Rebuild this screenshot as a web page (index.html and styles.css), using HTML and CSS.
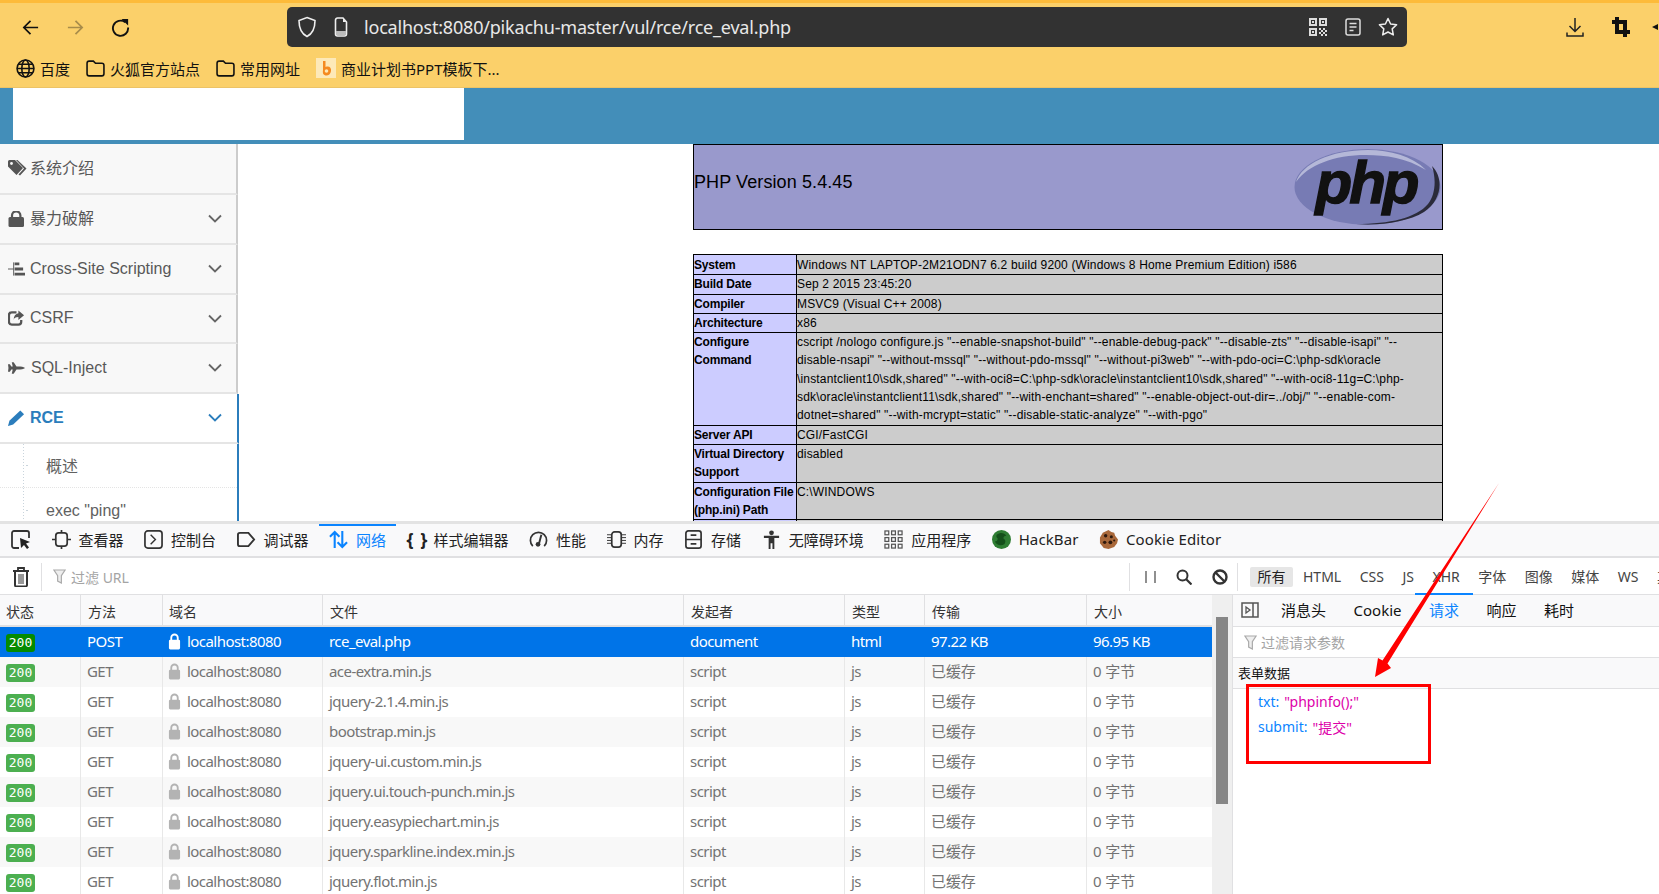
FILE: index.html
```html
<!DOCTYPE html>
<html lang="zh">
<head>
<meta charset="utf-8">
<title>rce_eval</title>
<link rel="stylesheet" href="styles.css">
</head>
<body>
<header class="browser">
  <div class="nav-row">
    <svg class="nav-ic" viewBox="0 0 20 20"><path d="M18 10H3M10 3l-7 7 7 7" fill="none" stroke="#111" stroke-width="1.8"/></svg>
    <svg class="nav-ic dim" viewBox="0 0 20 20"><path d="M2 10h15M10 3l7 7-7 7" fill="none" stroke="#111" stroke-width="1.8"/></svg>
    <svg class="nav-ic" viewBox="0 0 20 20"><path d="M15 4.5A8 8 0 1 0 18 10" fill="none" stroke="#111" stroke-width="2"/><path d="M11 1l7 0v7z" fill="#111"/></svg>
    <div class="urlbar">
      <svg class="url-shield" viewBox="0 0 20 22"><path d="M10 1.5l8 3c0 8-2 13-8 16-6-3-8-8-8-16z" fill="none" stroke="#eee" stroke-width="1.6"/></svg>
      <svg class="url-page" viewBox="0 0 14 20"><path d="M1.5 3a2 2 0 0 1 2-2H9l3.5 4v12a2 2 0 0 1-2 2h-7a2 2 0 0 1-2-2z" fill="none" stroke="#eee" stroke-width="1.6"/><path d="M9 1v4h3.5z" fill="#eee"/><path d="M2 14h10v4H2z" fill="#bbb"/></svg>
      <span class="url-text">localhost:8080/pikachu-master/vul/rce/rce_eval.php</span>
      <svg class="url-qr" viewBox="0 0 18 18"><path d="M0 0h8v8H0zM2 2v4h4V2zM10 0h8v8h-8zM12 2v4h4V2zM0 10h8v8H0zM2 12v4h4v-4z" fill="#ddd" fill-rule="evenodd"/><path d="M10 10h2v2h-2zM14 10h2v2h-2zM12 12h2v2h-2zM16 12h2v2h-2zM10 14h2v2h-2zM14 14h2v2h-2zM12 16h2v2h-2zM16 16h2v2h-2zM3 3h2v2H3zM13 3h2v2h-2zM3 13h2v2H3z" fill="#ddd"/></svg>
      <svg class="url-reader" viewBox="0 0 16 18"><rect x="1" y="1" width="14" height="16" rx="2" fill="none" stroke="#ddd" stroke-width="1.5"/><path d="M4.5 5.5h7M4.5 9h7M4.5 12.5h4" stroke="#ddd" stroke-width="1.5"/></svg>
      <svg class="url-star" viewBox="0 0 20 20"><path d="M10 1.5l2.600 5.500 6 .8-4.400 4.100 1.100 6L10 15l-5.300 2.900 1.100-6L1.400 7.800l6-.8z" fill="none" stroke="#eee" stroke-width="1.5" stroke-linejoin="round"/></svg>
    </div>
    <svg class="tool-dl" viewBox="0 0 18 20"><path d="M9 1v13M3.500 9L9 14.500 14.500 9M1 15.500V19h16v-3.500" fill="none" stroke="#222" stroke-width="1.5"/></svg>
    <svg class="tool-crop" viewBox="0 0 18 20"><path d="M5 0v15h13M0 5h13v15" fill="none" stroke="#111" stroke-width="4"/></svg>
    <svg class="tool-more" viewBox="0 0 6 20"><path d="M6 7L0 10l6 3z" fill="#111"/></svg>
  </div>
  <div class="bookmarks">
    <a class="bm"><svg class="bm-ic" viewBox="0 0 18 18"><g fill="none" stroke="#111" stroke-width="1.5"><circle cx="9" cy="9" r="8"/><ellipse cx="9" cy="9" rx="3.5" ry="8"/><path d="M1 9h16M2 5h14M2 13h14"/></g></svg>百度</a>
    <a class="bm"><svg class="bm-ic" viewBox="0 0 18 18"><path d="M1 4a2 2 0 0 1 2-2h4l2 2h6a2 2 0 0 1 2 2v8a2 2 0 0 1-2 2H3a2 2 0 0 1-2-2z" fill="none" stroke="#111" stroke-width="1.5"/></svg>火狐官方站点</a>
    <a class="bm"><svg class="bm-ic" viewBox="0 0 18 18"><path d="M1 4a2 2 0 0 1 2-2h4l2 2h6a2 2 0 0 1 2 2v8a2 2 0 0 1-2 2H3a2 2 0 0 1-2-2z" fill="none" stroke="#111" stroke-width="1.5"/></svg>常用网址</a>
    <a class="bm"><svg class="bm-fav" viewBox="0 0 20 20"><rect width="20" height="20" fill="#fde9b8"/><path d="M7 3h2.500v6c3.500-1.500 6 .5 5.500 4s-3 5-5.500 4.500S6.500 15 7 12z" fill="#f58a1f"/><circle cx="10.500" cy="13" r="1.800" fill="#fde9b8"/></svg>商业计划书PPT模板下...</a>
  </div>
</header>

<div class="site-head"><div class="site-logo"></div></div>

<div class="page">
  <nav class="sidebar">
    <div class="side-item first">
      <svg class="side-ic tag" viewBox="0 0 19 16"><path d="M0 1.500A1.500 1.500 0 0 1 1.500 0H7l8 8-6.500 7L0 6.500z" fill="#555"/><path d="M9.500 0l9 8.500-6.500 7-1.500-1L16 8.500 8 0z" fill="#555"/><circle cx="3.500" cy="3.500" r="1.400" fill="#f8f8f8"/></svg>
      <span class="side-label tight cjk">系统介绍</span>
    </div>
    <div class="side-item">
      <svg class="side-ic" viewBox="0 0 17 16"><path d="M4 7V4.500a4.200 4.200 0 0 1 8.400 0V7" fill="none" stroke="#555" stroke-width="2.2"/><rect x="0.500" y="6" width="15.500" height="10" rx="1.500" fill="#555"/></svg>
      <span class="side-label cjk">暴力破解</span>
      <svg class="chev" viewBox="0 0 14 9"><path d="M1 1.500l6 6 6-6" fill="none" stroke="#666" stroke-width="1.8"/></svg>
    </div>
    <div class="side-item">
      <svg class="side-ic" viewBox="0 0 18 16"><path d="M0 8h6M6 1v14" stroke="#555" stroke-width="1"/><path d="M7 1h5v3H7zM7 6.500h9v3H7zM7 12h11v3H7z" fill="#555"/></svg>
      <span class="side-label">Cross-Site Scripting</span>
      <svg class="chev" viewBox="0 0 14 9"><path d="M1 1.500l6 6 6-6" fill="none" stroke="#666" stroke-width="1.8"/></svg>
    </div>
    <div class="side-item short">
      <svg class="side-ic" viewBox="0 0 18 16"><path d="M9 2H4a3 3 0 0 0-3 3v7a3 3 0 0 0 3 3h7a3 3 0 0 0 3-3v-2" fill="none" stroke="#555" stroke-width="2.4"/><path d="M11 0l6 5-6 5V7C8 7 6.500 8 6 10c0-4 2-6.500 5-7z" fill="#555"/></svg>
      <span class="side-label">CSRF</span>
      <svg class="chev" viewBox="0 0 14 9"><path d="M1 1.500l6 6 6-6" fill="none" stroke="#666" stroke-width="1.8"/></svg>
    </div>
    <div class="side-item">
      <svg class="side-ic" viewBox="0 0 18 16"><path d="M0 4l2 0 1.500 2.500H5L4 2h2l3 4.500h4c3 0 5 1.500 5 1.500s-2 1.500-5 1.500H9l-3 4.500H4l1-4.500H3.500L2 12H0l.5-4z" fill="#555"/></svg>
      <span class="side-label wide">SQL-Inject</span>
      <svg class="chev" viewBox="0 0 14 9"><path d="M1 1.500l6 6 6-6" fill="none" stroke="#666" stroke-width="1.8"/></svg>
    </div>
    <div class="side-item active">
      <svg class="side-ic" viewBox="0 0 18 16"><path d="M13 0l4 4L5.500 15 0 16.500 1.500 11z" fill="#2b7dbc"/></svg>
      <span class="side-label">RCE</span>
      <svg class="chev" viewBox="0 0 14 9"><path d="M1 1.500l6 6 6-6" fill="none" stroke="#2b7dbc" stroke-width="1.8"/></svg>
    </div>
    <div class="side-subs">
      <div class="side-sub"><span class="sub-cjk">概述</span></div>
      <div class="side-sub">exec "ping"</div>
    </div>
  </nav>

  <main class="content">
    <div class="php-wrap">
      <div class="php-banner">
        <span class="php-title">PHP Version 5.4.45</span>
        <svg class="php-logo" viewBox="0 0 147 78">
          <ellipse cx="73.500" cy="39" rx="73" ry="38" fill="#777bb4"/>
          <path d="M2 34C8 16 36 2 74 2c22 0 44 6 58 20C112 10 92 7 72 7 40 7 14 17 2 34z" fill="#b5b8d8"/>
          <path d="M138 18c12 12 10 34-8 46-16 10-44 14-68 12 34 0 60-6 72-20 8-10 8-26 4-38z" fill="#2b2b3a"/>
          <text x="72" y="55" text-anchor="middle" class="php-word">php</text>
        </svg>
      </div>
      <table class="php-table">
        <tr class="row-first"><th>System</th><td>Windows NT LAPTOP-2M21ODN7 6.2 build 9200 (Windows 8 Home Premium Edition) i586</td></tr>
        <tr><th>Build Date</th><td>Sep 2 2015 23:45:20</td></tr>
        <tr><th>Compiler</th><td>MSVC9 (Visual C++ 2008)</td></tr>
        <tr><th>Architecture</th><td>x86</td></tr>
        <tr><th>Configure<br>Command</th><td>cscript /nologo configure.js "--enable-snapshot-build" "--enable-debug-pack" "--disable-zts" "--disable-isapi" "--<br>disable-nsapi" "--without-mssql" "--without-pdo-mssql" "--without-pi3web" "--with-pdo-oci=C:\php-sdk\oracle<br>\instantclient10\sdk,shared" "--with-oci8=C:\php-sdk\oracle\instantclient10\sdk,shared" "--with-oci8-11g=C:\php-<br>sdk\oracle\instantclient11\sdk,shared" "--with-enchant=shared" "--enable-object-out-dir=../obj/" "--enable-com-<br>dotnet=shared" "--with-mcrypt=static" "--disable-static-analyze" "--with-pgo"</td></tr>
        <tr><th>Server API</th><td>CGI/FastCGI</td></tr>
        <tr><th>Virtual Directory<br>Support</th><td>disabled</td></tr>
        <tr><th>Configuration File<br>(php.ini) Path</th><td>C:\WINDOWS</td></tr>
        <tr class="row-cut"><th></th><td></td></tr>
      </table>
    </div>
  </main>
</div>

<section class="devtools">
  <div class="dt-tabs">
    <svg class="dt-pick" viewBox="0 0 20 20"><path d="M8 18H3a2 2 0 0 1-2-2V3a2 2 0 0 1 2-2h13a2 2 0 0 1 2 2v5" fill="none" stroke="#333" stroke-width="1.8"/><path d="M9 8l10 4-4 1.500 3 4-2 1.500-3-4L10 18z" fill="#222"/></svg>
    <a class="dt-tab"><svg class="dt-ic" viewBox="0 0 20 20"><rect x="4" y="3" width="12" height="14" rx="3" fill="none" stroke="#333" stroke-width="1.8"/><path d="M10 0v3M10 17v3M0 10h4M16 10h4" stroke="#333" stroke-width="1.8"/></svg>查看器</a>
    <a class="dt-tab"><svg class="dt-ic" viewBox="0 0 20 20"><rect x="1" y="1" width="18" height="18" rx="3" fill="none" stroke="#333" stroke-width="1.8"/><path d="M7 5l5 5-5 5" fill="none" stroke="#333" stroke-width="1.5"/></svg>控制台</a>
    <a class="dt-tab"><svg class="dt-ic" viewBox="0 0 20 20"><path d="M3 3h9l6 7-6 7H3a2 2 0 0 1-2-2V5a2 2 0 0 1 2-2z" fill="none" stroke="#333" stroke-width="2"/></svg>调试器</a>
    <a class="dt-tab on"><svg class="dt-ic" viewBox="0 0 20 20"><path d="M6 19V2M1 7l5-5 5 5M14 1v17M9 13l5 5 5-5" fill="none" stroke="#0a84ff" stroke-width="2.2"/></svg>网络</a>
    <a class="dt-tab"><span class="dt-brace">{ }</span>样式编辑器</a>
    <a class="dt-tab"><svg class="dt-ic" viewBox="0 0 20 20"><path d="M4 17A8.500 8.500 0 1 1 16 17" fill="none" stroke="#333" stroke-width="1.8"/><path d="M13 5l-2.500 9.500" stroke="#333" stroke-width="2"/><circle cx="9.500" cy="15" r="2.500" fill="#333"/></svg>性能</a>
    <a class="dt-tab"><svg class="dt-ic" viewBox="0 0 20 20"><rect x="5" y="2" width="10" height="16" rx="3" fill="none" stroke="#333" stroke-width="1.8"/><path d="M0 5h5M0 8h5M0 11h5M0 14h5M15 5h5M15 8h5M15 11h5M15 14h5" stroke="#333" stroke-width="1"/></svg>内存</a>
    <a class="dt-tab"><svg class="dt-ic" viewBox="0 0 20 20"><rect x="2" y="1" width="16" height="18" rx="2.500" fill="none" stroke="#333" stroke-width="1.8"/><path d="M2 10h16M7 5.500h6M7 14.500h6" stroke="#333" stroke-width="1.8"/></svg>存储</a>
    <a class="dt-tab"><svg class="dt-ic" viewBox="0 0 20 20"><circle cx="10" cy="3" r="2.500" fill="#333"/><path d="M2 6h16v2.500h-5V20h-2v-6H9v6H7V8.500H2z" fill="#333"/></svg>无障碍环境</a>
    <a class="dt-tab"><svg class="dt-ic" viewBox="0 0 20 20"><g fill="none" stroke="#555" stroke-width="1.3"><rect x="1" y="1" width="4" height="4"/><rect x="8" y="1" width="4" height="4"/><rect x="15" y="1" width="4" height="4"/><rect x="1" y="8" width="4" height="4"/><rect x="8" y="8" width="4" height="4"/><rect x="15" y="8" width="4" height="4"/><rect x="1" y="15" width="4" height="4"/><rect x="8" y="15" width="4" height="4"/><rect x="15" y="15" width="4" height="4"/></g></svg>应用程序</a>
    <a class="dt-tab wide-text"><svg class="dt-ic" viewBox="0 0 20 20"><circle cx="10" cy="10" r="10" fill="#2e7d32"/><path d="M5 5c4-3 8-2 10 1-2 0-3 1-3 3 2 1 3 3 1 6-4 2-8 1-10-3 2 0 3-1 3-3-1-1-2-2-1-4z" fill="#14501a"/></svg>HackBar</a>
    <a class="dt-tab wide-text"><svg class="dt-ic" viewBox="0 0 20 20"><path d="M10 0l3 2 3 1 1 3 3 4-1 4-3 4-6 2-5-1-4-5V8l3-5z" fill="#a9683a"/><g fill="#2f1a0e"><circle cx="7" cy="6" r="1.800"/><circle cx="13" cy="7" r="1.600"/><circle cx="6" cy="13" r="1.800"/><circle cx="12" cy="13" r="2"/><circle cx="16" cy="11" r="1.100"/></g></svg>Cookie Editor</a>
  </div>

  <div class="dt-filter">
    <svg class="fb-trash" viewBox="0 0 16 20"><path d="M0 4h16M5 4V1h6v3" fill="none" stroke="#333" stroke-width="1.8"/><path d="M2 4h12v14a1.500 1.500 0 0 1-1.500 1.500h-9A1.500 1.500 0 0 1 2 18z" fill="none" stroke="#333" stroke-width="2"/><path d="M6 7v10M8 7v10M10 7v10" stroke="#333" stroke-width="1"/></svg>
    <div class="fb-input"><svg class="funnel" viewBox="0 0 14 16"><path d="M1 1h12L9 7v8l-4-2V7z" fill="#eee" stroke="#aaa" stroke-width="1.3"/></svg>过滤 URL</div>
    <div class="fb-tools">
      <svg class="fb-pause" viewBox="0 0 11 14"><path d="M1 1v12M10 1v12" stroke="#555" stroke-width="1.3"/></svg>
      <svg class="fb-ic" viewBox="0 0 16 16"><circle cx="6.500" cy="6.500" r="5" fill="none" stroke="#333" stroke-width="2"/><path d="M10 10l5.500 5.500" stroke="#333" stroke-width="2.2"/></svg>
      <svg class="fb-ic" viewBox="0 0 16 16"><circle cx="8" cy="8" r="6.500" fill="none" stroke="#333" stroke-width="2.4"/><path d="M3.500 3.500l9 9" stroke="#333" stroke-width="2.4"/></svg>
    </div>
    <div class="fb-types">
      <span class="type on">所有</span><span class="type">HTML</span><span class="type">CSS</span><span class="type">JS</span><span class="type">XHR</span><span class="type">字体</span><span class="type">图像</span><span class="type">媒体</span><span class="type">WS</span><span class="type">其他</span>
    </div>
  </div>

  <div class="dt-body">
    <div class="net">
      <div class="net-list">
        <div class="net-row head"><span>状态</span><span>方法</span><span>域名</span><span>文件</span><span>发起者</span><span>类型</span><span>传输</span><span>大小</span></div>
        <div class="net-row sel"><span><b class="st">200</b></span><span>POST</span><span class="dom"><svg class="lock" viewBox="0 0 14 18"><path d="M3.500 8V5a3.500 3.500 0 0 1 7 0v3" fill="none" stroke="#fff" stroke-width="2"/><rect x="1" y="7" width="12" height="10.500" rx="1.500" fill="#fff"/></svg>localhost:8080</span><span>rce_eval.php</span><span>document</span><span>html</span><span>97.22 KB</span><span>96.95 KB</span></div>
        <div class="net-row alt"><span><b class="st">200</b></span><span>GET</span><span class="dom"><svg class="lock" viewBox="0 0 14 18"><path d="M3.500 8V5a3.500 3.500 0 0 1 7 0v3" fill="none" stroke="#b3b3b3" stroke-width="2"/><rect x="1" y="7" width="12" height="10.500" rx="1.500" fill="#b3b3b3"/></svg>localhost:8080</span><span>ace-extra.min.js</span><span>script</span><span>js</span><span class="cn">已缓存</span><span class="cn">0 字节</span></div>
        <div class="net-row"><span><b class="st">200</b></span><span>GET</span><span class="dom"><svg class="lock" viewBox="0 0 14 18"><path d="M3.500 8V5a3.500 3.500 0 0 1 7 0v3" fill="none" stroke="#b3b3b3" stroke-width="2"/><rect x="1" y="7" width="12" height="10.500" rx="1.500" fill="#b3b3b3"/></svg>localhost:8080</span><span>jquery-2.1.4.min.js</span><span>script</span><span>js</span><span class="cn">已缓存</span><span class="cn">0 字节</span></div>
        <div class="net-row alt"><span><b class="st">200</b></span><span>GET</span><span class="dom"><svg class="lock" viewBox="0 0 14 18"><path d="M3.500 8V5a3.500 3.500 0 0 1 7 0v3" fill="none" stroke="#b3b3b3" stroke-width="2"/><rect x="1" y="7" width="12" height="10.500" rx="1.500" fill="#b3b3b3"/></svg>localhost:8080</span><span>bootstrap.min.js</span><span>script</span><span>js</span><span class="cn">已缓存</span><span class="cn">0 字节</span></div>
        <div class="net-row"><span><b class="st">200</b></span><span>GET</span><span class="dom"><svg class="lock" viewBox="0 0 14 18"><path d="M3.500 8V5a3.500 3.500 0 0 1 7 0v3" fill="none" stroke="#b3b3b3" stroke-width="2"/><rect x="1" y="7" width="12" height="10.500" rx="1.500" fill="#b3b3b3"/></svg>localhost:8080</span><span>jquery-ui.custom.min.js</span><span>script</span><span>js</span><span class="cn">已缓存</span><span class="cn">0 字节</span></div>
        <div class="net-row alt"><span><b class="st">200</b></span><span>GET</span><span class="dom"><svg class="lock" viewBox="0 0 14 18"><path d="M3.500 8V5a3.500 3.500 0 0 1 7 0v3" fill="none" stroke="#b3b3b3" stroke-width="2"/><rect x="1" y="7" width="12" height="10.500" rx="1.500" fill="#b3b3b3"/></svg>localhost:8080</span><span>jquery.ui.touch-punch.min.js</span><span>script</span><span>js</span><span class="cn">已缓存</span><span class="cn">0 字节</span></div>
        <div class="net-row"><span><b class="st">200</b></span><span>GET</span><span class="dom"><svg class="lock" viewBox="0 0 14 18"><path d="M3.500 8V5a3.500 3.500 0 0 1 7 0v3" fill="none" stroke="#b3b3b3" stroke-width="2"/><rect x="1" y="7" width="12" height="10.500" rx="1.500" fill="#b3b3b3"/></svg>localhost:8080</span><span>jquery.easypiechart.min.js</span><span>script</span><span>js</span><span class="cn">已缓存</span><span class="cn">0 字节</span></div>
        <div class="net-row alt"><span><b class="st">200</b></span><span>GET</span><span class="dom"><svg class="lock" viewBox="0 0 14 18"><path d="M3.500 8V5a3.500 3.500 0 0 1 7 0v3" fill="none" stroke="#b3b3b3" stroke-width="2"/><rect x="1" y="7" width="12" height="10.500" rx="1.500" fill="#b3b3b3"/></svg>localhost:8080</span><span>jquery.sparkline.index.min.js</span><span>script</span><span>js</span><span class="cn">已缓存</span><span class="cn">0 字节</span></div>
        <div class="net-row"><span><b class="st">200</b></span><span>GET</span><span class="dom"><svg class="lock" viewBox="0 0 14 18"><path d="M3.500 8V5a3.500 3.500 0 0 1 7 0v3" fill="none" stroke="#b3b3b3" stroke-width="2"/><rect x="1" y="7" width="12" height="10.500" rx="1.500" fill="#b3b3b3"/></svg>localhost:8080</span><span>jquery.flot.min.js</span><span>script</span><span>js</span><span class="cn">已缓存</span><span class="cn">0 字节</span></div>
      </div>
      <div class="net-scroll"><div class="net-thumb"></div></div>
    </div>
    <aside class="panel">
      <div class="panel-tabs">
        <svg class="panel-ic" viewBox="0 0 18 16"><rect x="1" y="1" width="16" height="14" fill="none" stroke="#555" stroke-width="1.5"/><path d="M12 1v14" stroke="#555" stroke-width="1.5"/><path d="M5 5l4 3-4 3z" fill="none" stroke="#555" stroke-width="1.3"/></svg>
        <span class="ptab">消息头</span><span class="ptab">Cookie</span><span class="ptab on">请求</span><span class="ptab">响应</span><span class="ptab">耗时</span>
      </div>
      <div class="panel-filter"><svg class="funnel" viewBox="0 0 14 16"><path d="M1 1h12L9 7v8l-4-2V7z" fill="#eee" stroke="#aaa" stroke-width="1.3"/></svg>过滤请求参数</div>
      <div class="panel-head">表单数据</div>
      <div class="panel-data">
        <div class="kv"><span class="k">txt:</span> <span class="v">"phpinfo();"</span></div>
        <div class="kv"><span class="k">submit:</span> <span class="v">"提交"</span></div>
      </div>
    </aside>
  </div>
</section>

<div class="mark-box"></div>
<svg class="mark-arrow" viewBox="1370 480 135 200"><polygon points="1375,677 1378,658 1382.5,660.5 1499,483 1387.5,663.5 1391,668" fill="#f00"/></svg>
</body>
</html>
```
FILE: styles.css
```css
* { box-sizing: border-box; }
html, body { margin: 0; height: 894px; overflow: hidden; }
body {
  position: relative;
  width: 1659px;
  display: flex;
  flex-direction: column;
  font-family: "Noto Sans", "Noto Sans CJK SC", sans-serif;
  background: #fff;
}
svg { display: block; flex: none; }

/* browser chrome */
.browser {
  height: 88px;
  flex: none;
  background: #fbd06a;
  border-top: 3px solid #fdbb3a;
  border-bottom: 1px solid #ecc366;
}
.nav-row { height: 44px; padding: 4px 0 0 21px; display: flex; align-items: center; }
.nav-ic { width: 19px; height: 19px; margin-right: 26px; }
.nav-ic.dim { opacity: .35; }
.urlbar {
  width: 1120px;
  height: 40px;
  margin-left: 131px;
  padding: 0 9px 0 10px;
  display: flex;
  align-items: center;
  background: #323232;
  border-radius: 5px;
  color: #eee;
}
.url-shield { width: 20px; height: 22px; }
.url-page { width: 14px; height: 20px; margin-left: 17px; }
.url-text { margin-left: 16px; flex: 1; font-size: 18px; letter-spacing: -.2px; color: #e8e8e8; white-space: nowrap; }
.url-qr { width: 18px; height: 18px; }
.url-reader { width: 16px; height: 18px; margin-left: 18px; }
.url-star { width: 20px; height: 20px; margin-left: 17px; }
.tool-dl { width: 18px; height: 20px; margin-left: 159px; }
.tool-crop { width: 18px; height: 20px; margin-left: 28px; }
.tool-more { width: 6px; height: 20px; margin-left: 22px; }
.bookmarks { height: 40px; padding: 2px 0 0 16px; display: flex; align-items: center; gap: 16px; }
.bm { display: flex; align-items: center; gap: 5px; font-size: 15px; color: #111; white-space: nowrap; }
.bm-ic { width: 19px; height: 19px; }
.bm-fav { width: 20px; height: 20px; }

/* site header */
.site-head { height: 56px; flex: none; padding-left: 13px; background: #438eb9; }
.site-logo { width: 451px; height: 52px; background: #fff; }

/* main page */
.page { height: 377px; flex: none; display: flex; overflow: hidden; font-family: "Liberation Sans", "Noto Sans CJK SC", sans-serif; }
.sidebar { width: 239px; flex: none; background: #fff; }
.side-item {
  width: 238px;
  height: 50px;
  padding: 0 14px 1px 8px;
  display: flex;
  align-items: center;
  background: #f8f8f8;
  border-bottom: 2px solid #e5e5e5;
  border-right: 2px solid #ccc;
  color: #585858;
  font-size: 16px;
}
.side-item.first { height: 51px; }
.side-item.short { height: 49px; }
.side-ic { width: 17px; height: 16px; }
.side-ic.tag { width: 19px; }
.side-label { margin-left: 5px; flex: 1; white-space: nowrap; }
.side-label.tight { margin-left: 3px; }
.side-label.wide { margin-left: 6px; }
.side-label.cjk { padding-bottom: 3px; }
.chev { width: 14px; height: 9px; }
.side-item.active { width: 239px; background: #fff; color: #2b7dbc; font-weight: bold; border-right: 2px solid #2b7dbc; padding-right: 15px; }
.side-subs { width: 239px; border-right: 2px solid #2b7dbc; }
.side-sub {
  height: 44px;
  padding-left: 46px;
  display: flex;
  align-items: center;
  font-size: 16px;
  color: #616161;
  border-bottom: 1px dotted #e4e4e4;
  background:
    linear-gradient(#c9d4dc 50%, transparent 50%) 23px 0 / 1px 3px repeat-y,
    linear-gradient(90deg, #c9d4dc 50%, transparent 50%) 26px 50% / 3px 1px no-repeat;
}
.side-sub + .side-sub { height: 46px; }
.sub-cjk { padding-bottom: 2px; }
.content { flex: 1; padding: 0 0 0 454px; background: #fff; }
.php-wrap { width: 750px; }
.php-banner {
  height: 86px;
  padding: 0 1px 0 0;
  display: flex;
  align-items: center;
  justify-content: space-between;
  background: #9999cc;
  border: 1px solid #000;
}
.php-title { font-size: 18px; letter-spacing: .1px; color: #000; margin-bottom: 9px; }
.php-logo { width: 147px; height: 78px; }
.php-word { font: italic bold 60px "Liberation Sans", sans-serif; fill: #111; stroke: #111; stroke-width: 1.4px; letter-spacing: -3px; }
.php-table {
  width: 750px;
  margin-top: 24px;
  border-collapse: collapse;
  table-layout: fixed;
  font-size: 12px;
  line-height: 18.3px;
  color: #000;
}
.php-table th, .php-table td { padding: 0; vertical-align: top; border: 1px solid #000; font-weight: normal; text-align: left; white-space: nowrap; }
.php-table th { width: 103px; background: #ccccff; font-weight: bold; letter-spacing: -.18px; }
.php-table td { background: #cccccc; letter-spacing: .16px; }
.row-first th, .row-first td { padding-top: 1px; }
.row-cut th, .row-cut td { height: 10px; }

/* devtools */
.devtools {
  flex: 1;
  min-height: 0;
  display: flex;
  flex-direction: column;
  border-top: 3px solid #e3e3e3;
  color: #333;
  font-size: 14px;
  background: #fff;
}
.dt-tabs {
  height: 34px;
  flex: none;
  padding-left: 11px;
  display: flex;
  align-items: center;
  gap: 20.5px;
  background: #f9f9fa;
  border-bottom: 2px solid #e0e0e2;
  font-size: 15px;
  white-space: nowrap;
}
.dt-pick { width: 20px; height: 20px; }
.dt-tab { height: 32px; padding-bottom: 2px; display: flex; align-items: center; gap: 8px; color: #222; position: relative; }
.dt-tab.wide-text { letter-spacing: .1px; }
.dt-tab.on { color: #0a84ff; }
.dt-tab.on::before { content: ""; position: absolute; left: -10px; right: -10px; top: 0; height: 2px; background: #0a84ff; }
.dt-ic { width: 19px; height: 19px; }
.dt-brace { width: 19px; font-size: 18px; font-weight: bold; text-align: center; letter-spacing: 1px; }
.dt-filter { height: 37px; flex: none; padding-top: 1px; display: flex; align-items: center; border-bottom: 1px solid #e0e0e2; background: #fff; }
.fb-trash { width: 16px; height: 20px; margin-left: 13px; }
.fb-input { flex: 1; margin-left: 12px; height: 28px; padding-left: 11px; display: flex; align-items: center; gap: 5px; border-left: 1px solid #e0e0e2; color: #a4a4a4; font-size: 14px; }
.funnel { width: 13px; height: 15px; }
.fb-tools { height: 28px; width: 109px; padding: 0 10px 0 15px; display: flex; align-items: center; gap: 20px; border-left: 1px solid #e0e0e2; border-right: 1px solid #e0e0e2; }
.fb-pause { width: 11px; height: 14px; }
.fb-ic { width: 16px; height: 16px; }
.fb-types { width: 421px; padding-left: 12px; display: flex; align-items: center; gap: 18.5px; font-size: 14px; color: #444; white-space: nowrap; overflow: hidden; }
.type { height: 20px; line-height: 20px; flex: none; }
.type.on { width: 43px; text-align: center; background: #e6e6e6; border-radius: 2px; color: #222; margin-right: -8.5px; }
.dt-body { flex: 1; min-height: 0; display: flex; }
.net { width: 1233px; flex: none; display: flex; border-right: 1px solid #e0e0e2; }
.net-list { width: 1212px; flex: none; }
.net-scroll { flex: 1; padding: 22px 4px 0; background: #efefef; }
.net-thumb { height: 187px; background: #868686; }
.net-row {
  height: 30px;
  display: grid;
  grid-template-columns: 80px 82px 160px 361px 161px 80px 162px 126px;
  align-items: stretch;
  font-size: 15px;
  letter-spacing: -.55px;
  color: #737373;
  background: #fff;
  white-space: nowrap;
}
.net-row span { padding: 0 0 2px 6px; display: flex; align-items: center; border-left: 1px solid #e8e8e8; }
.net-row span:first-child { border-left: 0; }
.net-row span.dom { padding-left: 5px; }
.net-row span.cn { padding-bottom: 4px; letter-spacing: -.1px; }
.net-row.alt { background: #f8f8f8; }
.net-row.head { height: 32px; background: #f9f9fa; color: #333; font-size: 14px; letter-spacing: 0; border-bottom: 2px solid #e0e0e2; }
.net-row.head span { padding: 2px 0 0 7px; border-left-color: #e0e0e2; }
.net-row.head span:first-child { padding-left: 6px; }
.net-row.head span:nth-child(3) { padding-left: 6px; }
.net-row.sel { background: #0074e8; color: #fff; }
.net-row.sel span { border-left-color: #0074e8; }
.st { width: 29px; height: 18px; margin-top: 4px; text-align: center; letter-spacing: 0; border-radius: 3px; background: #4caf50; color: #fff; font: normal 13px/18px "DejaVu Sans Mono", monospace; }
.net-row.sel .st { background: #058b00; }
.lock { width: 13px; height: 17px; margin-right: 6px; }
.panel { flex: 1; min-width: 0; }
.panel-tabs { height: 32px; padding: 0 0 2px 8px; display: flex; align-items: center; background: #f9f9fa; border-bottom: 1px solid #e0e0e2; font-size: 15px; color: #111; white-space: nowrap; }
.panel-ic { width: 18px; height: 16px; margin-right: 22px; }
.ptab { margin-right: 27.5px; position: relative; }
.ptab.on { color: #0a84ff; }
.ptab.on::before { content: ""; position: absolute; left: -14px; right: -14px; top: -6px; height: 2px; background: #0a84ff; }
.panel-filter { height: 31px; padding-left: 11px; display: flex; align-items: center; gap: 4px; color: #a4a4a4; font-size: 14px; border-bottom: 1px solid #e0e0e2; }
.panel-head { height: 31px; padding: 5px 0 0 5px; font-size: 13px; color: #111; background: #f9f9fa; border-bottom: 1px solid #e0e0e2; }
.panel-data { padding: 0 0 0 25px; font-size: 14px; }
.kv { height: 25px; display: flex; align-items: center; gap: 5px; }
.k { color: #0a84ff; }
.v { color: #dd00a9; }

/* red annotations over the screenshot */
.mark-box { position: absolute; left: 1246px; top: 684px; width: 185px; height: 80px; border: 3px solid #f00; }
.mark-arrow { position: absolute; left: 1370px; top: 480px; width: 135px; height: 200px; }
```
